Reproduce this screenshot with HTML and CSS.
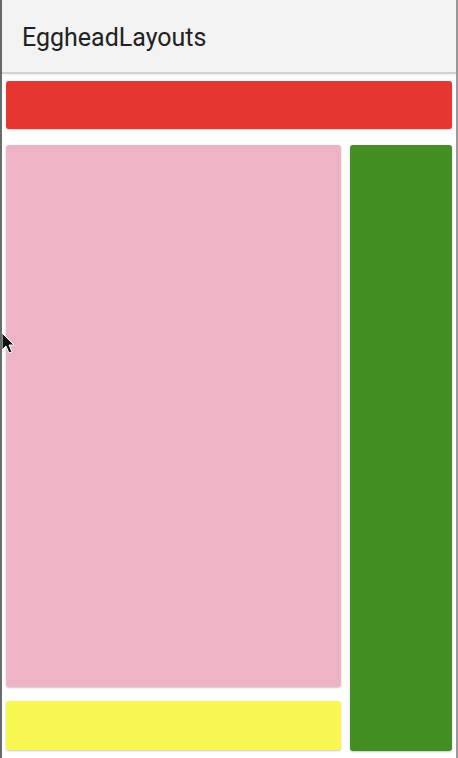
FILE: index.html
```html
<html>
    <head>
        <title>EggheadLayouts</title>
        <link rel="stylesheet" href="styles.css">
    </head>
    <body>
        <div class="screen">
            <div class="toolbar">
                <span class="toolbar-title">EggheadLayouts</span>
            </div>
            <div class="content">
                <div class="box red"></div>
                <div class="row">
                    <div class="left-col">
                        <div class="box pink"></div>
                        <div class="box yellow"></div>
                    </div>
                    <div class="box green"></div>
                </div>
            </div>
            <svg class="cursor" width="14" height="22" viewBox="0 0 14 22">
                <path d="M0 0 L0 17 L4 13 L7 20 L10 19 L7 12 L12 12 Z" fill="#111" stroke="#fff" stroke-width="1"/>
            </svg>
        </div>
    </body>
</html>
```
FILE: styles.css
```css
body {
    margin: 0;
    background-color: white;
    font-family: Roboto, "Noto Sans", sans-serif;
}

.screen {
    position: relative;
    width: 458px;
    height: 758px;
    box-sizing: border-box;
    border-left: 2px solid #6a6a6a;
    border-right: 2px solid #9a9a9a;
    display: flex;
    flex-direction: column;
}

.toolbar {
    height: 74px;
    background-color: #f3f3f3;
    border-bottom: 2px solid #d2d2d2;
    box-shadow: 0 1px 2px rgba(0, 0, 0, 0.08);
    box-sizing: border-box;
    display: flex;
    align-items: center;
    padding-left: 20px;
}

.toolbar-title {
    font-size: 25px;
    color: #222;
    margin-top: 2px;
}

.content {
    flex: 1;
    display: flex;
    flex-direction: column;
    padding: 7px 4px 7px 4px;
    gap: 16px;
}

.box {
    border-radius: 3px;
    box-shadow: 0 1px 2px rgba(0, 0, 0, 0.22);
}

.red {
    height: 48px;
    background-color: #e53631;
}

.row {
    flex: 1;
    display: flex;
    gap: 9px;
}

.left-col {
    flex: 1;
    display: flex;
    flex-direction: column;
    gap: 14px;
    padding-bottom: 1px;
}

.pink {
    flex: 1;
    background-color: #eeb3c5;
}

.yellow {
    height: 49px;
    background-color: #f9f852;
}

.green {
    width: 102px;
    background-color: #438f23;
}

.cursor {
    position: absolute;
    left: 0;
    top: 333px;
}
```
